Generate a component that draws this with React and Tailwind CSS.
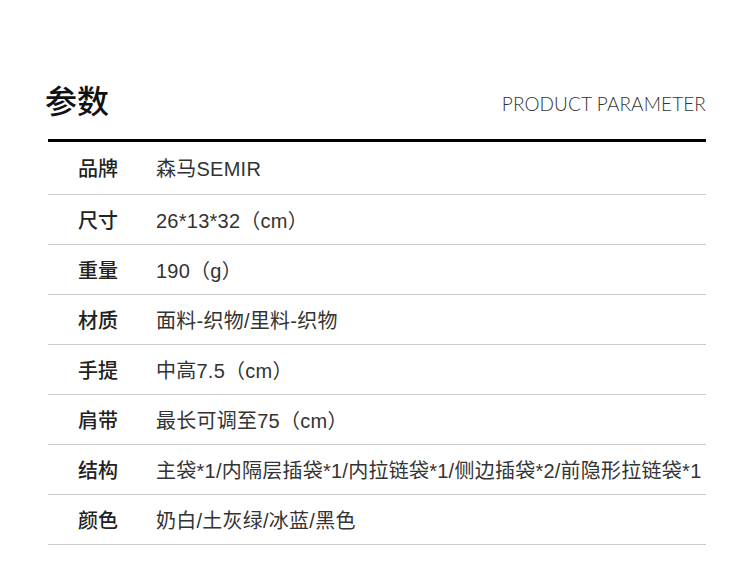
import React from "react";

const rows = [
  ["品牌", "森马SEMIR"],
  ["尺寸", "26*13*32（cm）"],
  ["重量", "190（g）"],
  ["材质", "面料-织物/里料-织物"],
  ["手提", "中高7.5（cm）"],
  ["肩带", "最长可调至75（cm）"],
  ["结构", "主袋*1/内隔层插袋*1/内拉链袋*1/侧边插袋*2/前隐形拉链袋*1"],
  ["颜色", "奶白/土灰绿/冰蓝/黑色"],
];

export default function App() {
  return (
    <div
      className="w-[750px] h-[579px] bg-white overflow-hidden pl-[48px] pr-[44px]"
      style={{ fontFamily: '"Liberation Sans", "Noto Sans CJK SC", sans-serif' }}
    >
      <div className="h-[139px] flex items-end justify-between pb-[24px]">
        <div
          className="-ml-[3px] text-[32px] font-medium text-[#111] leading-none"
          style={{ fontFamily: '"Noto Sans CJK SC", sans-serif' }}
        >
          参数
        </div>
        <div
          className="text-[19px] font-light text-[#333] leading-none pb-[2px] tracking-[0.1px]"
          style={{ fontFamily: 'Lato, "Noto Sans", sans-serif' }}
        >
          PRODUCT PARAMETER
        </div>
      </div>
      <div className="border-t-[3px] border-black">
        {rows.map(([k, v], i) => (
          <div
            key={k}
            className={
              "flex items-center border-b border-[#cccccc] pt-[2px] " +
              (i === 0 ? "h-[53px]" : "h-[50px]")
            }
          >
            <div className="w-[108px] pl-[30px] text-[20px] font-medium text-[#222] whitespace-nowrap">
              {k}
            </div>
            <div className="text-[20px] text-[#333] whitespace-nowrap tracking-[0.25px]">{v}</div>
          </div>
        ))}
      </div>
    </div>
  );
}
